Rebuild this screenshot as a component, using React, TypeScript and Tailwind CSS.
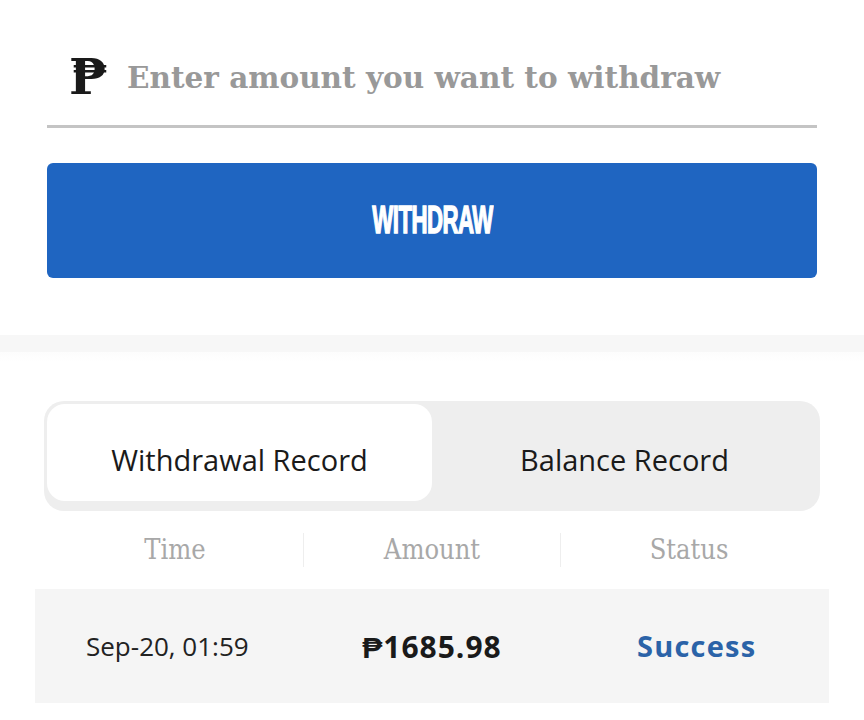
const records = [
  { time: "Sep-20, 01:59", amount: "₱1685.98", status: "Success" },
];

const App = (): JSX.Element => {
  return (
    <div className="w-[864px] h-[720px] bg-white overflow-hidden font-['Liberation_Sans',sans-serif]">
      {/* Withdraw form */}
      <section className="px-[47px] pt-[40px] pb-[57px]">
        <div className="flex items-center h-[88px] pb-[9px] border-b-[3px] border-[#c4c4c4]">
          <span className="w-[80px] pl-[22px] pb-[2px] text-[49px] leading-none font-bold text-[#1a1a1a] font-['DejaVu_Serif',serif]">
            ₱
          </span>
          <input
            className="flex-1 bg-transparent outline-none text-[29.5px] font-bold text-[#333] placeholder:text-[#999999] font-['DejaVu_Serif',serif]"
            placeholder="Enter amount you want to withdraw"
          />
        </div>
        <button className="mt-[35px] w-full h-[115px] rounded-[6px] bg-[#1f65c1] flex items-center justify-center">
          <span className="inline-block scale-x-[0.57] text-white text-[39px] font-bold tracking-tight [-webkit-text-stroke:1.5px_white] font-['Liberation_Sans',sans-serif]">
            WITHDRAW
          </span>
        </button>
      </section>

      <div className="h-[17px] bg-[#f7f7f7]" />
      <div className="h-[10px] bg-gradient-to-b from-[#fcfcfc] to-white" />

      {/* Records */}
      <section className="pt-[39px] px-[35px]">
        <div className="mx-[9px] p-[3px] pb-[10px] rounded-[20px] bg-[#eeeeee] flex">
          <button className="w-[385px] h-[97px] pt-[14px] rounded-[18px] bg-white text-[29px] font-medium text-[#1a1a1a] font-['Open_Sans',sans-serif]">
            Withdrawal Record
          </button>
          <button className="flex-1 h-[97px] pt-[14px] text-[29px] font-medium text-[#1a1a1a] font-['Open_Sans',sans-serif]">
            Balance Record
          </button>
        </div>

        <div className="mx-[12px] flex h-[78px] items-center text-[27px] text-[#a8a8a8] font-['DejaVu_Serif_Condensed','DejaVu_Serif',serif]">
          <div className="flex-1 text-center">Time</div>
          <div className="w-px h-[34px] bg-[#eeeeee]" />
          <div className="flex-1 text-center">Amount</div>
          <div className="w-px h-[34px] bg-[#eeeeee]" />
          <div className="flex-1 text-center">Status</div>
        </div>

        {records.map((r, i) => (
          <div key={i} className="grid grid-cols-3 items-center h-[114px] bg-[#f5f5f5] font-['Open_Sans',sans-serif]">
            <div className="text-center text-[26px] text-[#222]">{r.time}</div>
            <div className="text-center text-[30px] font-bold tracking-[1px] text-[#1a1a1a]">{r.amount}</div>
            <div className="text-center text-[29px] font-bold tracking-[1.2px] text-[#2b63a8]">{r.status}</div>
          </div>
        ))}
      </section>
    </div>
  );
};

export default App;
